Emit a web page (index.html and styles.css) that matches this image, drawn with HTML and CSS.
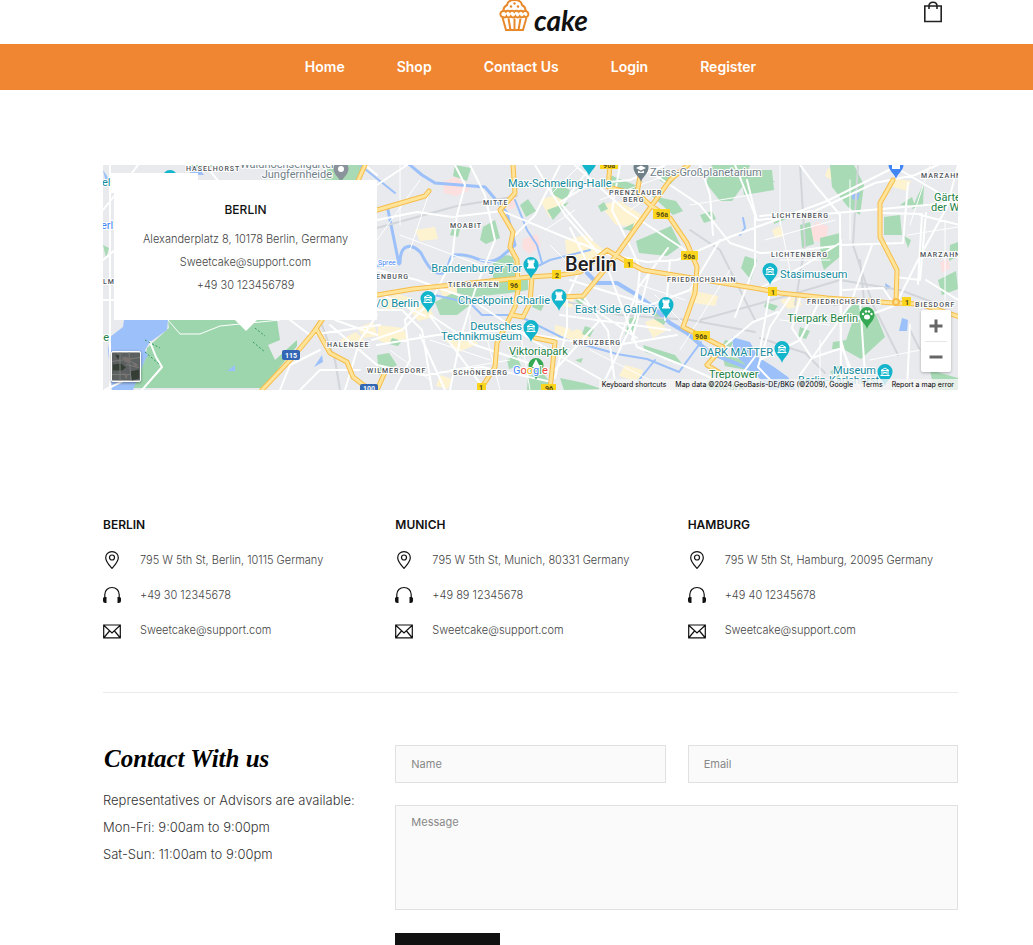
FILE: index.html
```html
<!DOCTYPE html>
<html lang="en">
<head>
<meta charset="utf-8">
<meta name="viewport" content="width=device-width, initial-scale=1">
<title>Cake - Contact Us</title>
<link rel="stylesheet" href="styles.css">
</head>
<body>
<svg class="defs" width="0" height="0" aria-hidden="true">
  <symbol id="i-pin" viewBox="0 0 18 18"><path d="M9 .6C5.2.6 2.7 3.300 2.700 6.700 2.700 10.600 6.600 14.500 9 17.400c2.400-2.900 6.300-6.800 6.300-10.700C15.300 3.300 12.800.6 9 .6z"/><circle cx="9" cy="6.500" r="2.500"/></symbol>
  <symbol id="i-phone" viewBox="0 0 18 18"><path d="M1.800 12V8.500C1.800 4.500 4.800 1.500 9 1.500s7.200 3 7.200 7V12"/><path class="solid" d="M0 12.500q0-1.500 1.500-1.500h2v6h-1Q0 17 0 14.500zM18 12.500q0-1.500-1.500-1.500h-2v6h1q2.500 0 2.500-2.500z"/></symbol>
  <symbol id="i-mail" viewBox="0 0 18 18"><path d="M.7 4h16.600v12.800H.7zM1 4.500l8 7.500 8-7.500M1 16.500L6.500 10M17 16.500L11.500 10"/></symbol>
</svg>

<header class="top container">
  <a class="logo" href="#" aria-label="Cake home">
    <svg width="31" height="34" viewBox="0 0 31 34" aria-hidden="true" fill="none" stroke="#e8892b" stroke-width="2">
      <path d="M4.500 13C4 8.500 6 7 8 6 8.500 2.500 11.500 1 15.500 1s7 1.500 7.500 5c2 1 4 2.500 3.500 7"/>
      <path d="M3 12.500c-2.500 1-2 5 .5 5.500 1.500.5 3.500.5 4-.8 1 1.600 3.500 1.600 4.300 0 1 1.600 3.700 1.600 4.600 0 1 1.600 3.500 1.600 4.400 0 1 1.500 3.300 1.500 4.200 0 1 1.300 3 1 3.800-.2 1-1.500.5-4-1-4.500-1-1-3-.8-3.800.3-1-1.300-3.300-1.300-4.200 0-1-1.300-3.500-1.300-4.400 0-1-1.300-3.500-1.300-4.400 0-1-1.300-3.200-1.300-4.200 0-1-1.200-2.800-1.200-3.800-.3z"/>
      <path d="M3.500 18.500L7 31h17l3.500-12.500M9.500 19.500L11.500 31M15.500 19.500V31M21.500 19.500L19.500 31"/>
      <g fill="#e8892b" stroke="none"><circle cx="12" cy="7.500" r="1.300"/><circle cx="15.500" cy="4.500" r="1.200"/><circle cx="19" cy="7.500" r="1.300"/></g>
    </svg>
    <span>cake</span>
  </a>
  <a class="bag" href="#" aria-label="Shopping bag">
    <svg width="20" height="22" viewBox="0 0 20 22" fill="none" stroke="#222" stroke-width="1.600"><path d="M1.800 5h16.400v15.500H1.800zM6 8V5c0-5 8-5 8 0v3"/></svg>
  </a>
</header>

<nav class="nav container" aria-label="Main">
  <a href="#">Home</a><a href="#">Shop</a><a href="#">Contact Us</a><a href="#">Login</a><a href="#">Register</a>
</nav>

<main class="container">
  <section class="map" aria-label="Map of Berlin">
    <svg class="map-art" viewBox="103 165 855 225" preserveAspectRatio="xMidYMid slice" role="img" aria-label="Berlin">
      <defs>
        <g id="drop"><path d="M0 11C-1 6-7.500 3-7.500-3.500a7.500 7.500 0 0 1 15 0C7.500 3 1 6 0 11z"/></g>
        <g id="g-museum" fill="none" stroke="#fff"><path d="M-4-4.500L0-7l4 2.500zM-3-4.500v5M3-4.500v5M-4.500.500h9M-1.200-.8v-2.400L0-2l1.200-1.200v2.400"/></g>
        <g id="g-tower"><path fill="#fff" d="M-3.500-8.500h2v1h1v-1h1v1h1v-1h2v3l-1 1L3-1h1v1.500h-8V-1h1l.5-3.500-1-1z"/></g>
      </defs>
      <rect x="103" y="165" width="855" height="225" fill="#e8eaed"/>

      <g fill="#fef3d0">
        <path d="M378 325l25 3 5 10-20 6-10-4zM380 300l18-6 14 4-4 9-24 3zM408 308l20-5 6 14-16 4zM440 290l16-4 2 10-14 4zM445 340l25-6 8 10-20 8zM415 230l20-3 3 12-18 2zM600 205l20-4 22 14-4 12-22-2zM565 240l20-5 18 14-16 14-20-6zM540 200l18-6 8 12-16 12zM645 322l12-4 10 12-14 8zM560 335l18-6 12 8-14 10zM625 365l18 5-4 12-20-6zM690 290l28 6-3 10-22-3zM555 325l16 4-4 12-12-3zM440 375l12 4-4 10-12-3zM772 230l8-4 4 10-9 2zM828 168l8 4-4 8-7-4zM893 178l18 3-4 10-14-4zM780 300l18-3 4 8-14 4zM340 340l16-8 8 8-15 9zM357 328l16-6 5 14-14 2zM562 293l12 3-2 12-11-3zM720 185l8 2-2 8-8-2z"/>
      </g>
      <g fill="#fce0e0"><path d="M443 182l14-6 13 14-14 6-12-3zM523 239l14-5 4 12-12 8-7-6zM660 240l9-4 4 12-10 2zM808 232l8-10 12 4-2 18-14-4zM940 262l8-3 2 9-8 5zM508 200l8-4-1 12-7 2z"/></g>

      <g fill="#a8dab5">
        <path fill="#9dd6ad" d="M168 320l109 0 3 20-12 5 7 15 22-20 0 6-34 42-131 0 13-28 2-12 22-20z"/>
        <path d="M328 165h39l-12 20h-32zM190 165l10 8 14-8zM455 165l16 3-4 13-14-5zM483 227l12-7 5 18-14 6-6-4zM453 226l7 3-2 8-8-2zM457 287l36-9v-18l14-5 6 2 4 20 11 3v10l-18 3-37 4-16-4zM435 302l18-9 20 10-16 12h-17zM520 205l8-6 8 12-10 6zM547 210l22-8-16 18zM553 182l17 8-4 12-14-8zM610 175l30 12-6 8-24-10zM598 206l6-4 4 7-7 3zM622 229l12-6-2 8zM636 241l35-15 10 20-14 10-28-3zM712 165h38l-8 22-10 14h-12l-14-18zM740 170h32l2 20-30 5zM745 256l12 4-6 20-10-12zM700 215l12-4 4 8-12 4zM773 215l8-2 5 6-12 5zM760 180l15 1-13 10zM830 165h24l10 20-4 30-12-8-16-20zM820 238l20-5 2 22-18 15-3-10zM800 225l10-3 4 22-12 4zM884 217l16-2 2 20-18 0zM918 195l6-12-1 22-11 4zM950 245l8-3v14l-9 5zM904 236l7 4-3 8zM853 320l22-8 10 25-24 22-18-10zM833 342l14-2-4 10-11-1zM800 327l10 4-4 8-8-2zM830 372l10-7-1 15zM655 308l12 10-3 7-10-6zM630 318l8-1-6 16-7 2zM585 326l9 3-4 8-8-3zM643 345l32 10 8 10-38-13zM560 378l24 5 18 6-38 1zM528 376l14-4 8 10-10 8h-13zM507 360l9-6 5 12-12 3zM392 338l10 3-4 5-9-2zM377 355l12-2 8 12-18 10zM722 355l28 6-3 9-22-4zM725 340l8 2-2 5-8-2zM707 380l28 2-2 8h-27zM930 370l28 8v12h-24zM766 302l12 4-4 5-10-4zM900 205l12-8 3 9zM103 245l6 3-3 10zM938 280l18-9 2 18-16 6zM535 300l10 3-4 8-9-4zM658 170l20 5-8 10-10-4z"/>
        <path d="M652 196l24 5 7 10-10 4zM575 360l8-2-2 5zM575 300l9-2-2 9zM842 314l12-10 10 3-8 12z"/>
      </g>

      <g fill="#9cc0f9">
        <path d="M124 320h44l-1 10-17 12-5 8 3 5-3 5-5 12-7 18h-21l-4-40 2-13 13-10z"/>
        <path d="M732 337l18 5 8 15 16 10 14 10 8 13h-25l-22-22-15-14zM902 318l6 2-1 11-8 0zM852 193l8 0-2 7-6-1zM885 283l6 4-5 3zM103 170l8 12-5 1zM188 167l10 0 6 8h-13zM322 355l-8 12 9-5zM235 365l-8 6 8 0z"/>
      </g>
      <g class="line" stroke="#9cc0f9">
        <path stroke-width="4" d="M587 273l10 10 20 0 20 12 16 12 17 16 17 10 23 20 50 20"/>
        <path stroke-width="3" d="M400 263c0-20 12-20 21-10 6 12 12 22 22 20 8-2 4-20 14-18 20-2 26 14 44 2l14-12-8-32-22-26-50-4-13-8-18-15M399 264l-11-54"/>
        <path stroke-width="2" d="M425 293l45 10 12 12 35 0 20 10 30 15 50 14 30 5 32 13 22-30M515 200l12 30 10 15 5 18M377 266l20-3M530 270l20-10 40-10M740 235l5-7-2-10M360 165l35 28M635 385l20-25"/>
      </g>
      <g class="line" stroke="#d2d5da" stroke-width="2">
        <path d="M377 228l80-22 60-10M560 300l60 15 70 5 65 12M690 230l30 20 35 70M700 320l90-25 50-15 60 10 40 15M858 165l-5 80 20 60 25 50M860 260l4 40-30 5M800 165l5 80-10 60M320 320l15 40 5 30M760 338l45 15 20 20M910 330l10 20"/>
      </g>

      <g class="line" stroke="#fff" stroke-width="2">
        <path d="M377 220l40-8 35 5 50-6 60 25 45 18 40 8 30-2 50-22 60-22 40-15 70-35M377 185l30-20M377 270l40 10 55 20 60 40 70 40M455 165l10 20-8 30-5 45-20 40-30 30-30 10M470 165l15 30 10 45-20 50-15 50-10 50M395 390l15-30-5-40 25-30M425 316l-40-20M430 315l45 30 60 20M430 316l15 20 40 54M445 390l-25-55M377 345l60-10 70-5 70 12 40 3 60-10M535 165l30 50 35 40M560 165l-25 50-20 20M592 165l-30 40 30 35M575 165l50 45 60 40M620 165l-8 45 20 40 8 18-5 50-30 62M640 165l60 40 30 38 30 10 35-2 40-5M570 228l15 30-18 40 0 30-12 50M583 296l25 35 8 59M607 267l15 40 15 40 50 20 40 18M650 270l-18 70M668 248l-30 40-20 57M700 165l10 30 3 40M735 165l20 50v50l-20 52M747 180l10 40 203-18M560 202l30-18 40-4 35-15M800 165l15 20 25 30 1 180M760 216l55-5 60-28 40-8 45-20M841 245l62-2 5-60M880 213l42 1-4 70M895 277l25 3 6-67M872 245l-22 60-50 70M770 290l-10 60-30 40M790 297l-20 30-12 40 22 23M800 298l-8 30 20 30 30-10 18 42M841 240v100l15 55M843 290l40-2 10 15M760 288l40-20 40-25M820 300l-20 40-40 20M855 320l28-10 20-8M897 302l20-40 30-55 11-42M900 170l60 35M920 215l40 10M926 280l32 20M910 325l-3 65M860 300l6 90M720 240l-30 50-40 15-80-25M723 347l30-25 25-10M670 260l-5 60M577 298l60 40M600 320l-45 50M560 315l110 15M377 365l45 10 60-8 70 15M377 310l25 0 20 20 10 60M330 325l47 40M335 320l42 15M345 390l15-50 17-25M290 320l20 15 70-10M300 390l20-20 40 0M280 390l10-25 30-15M103 210l20-25 15-20M105 390l20-10M110 165v225M103 300l15 0M103 260l12-10M205 165l15 18M290 165v15M377 175l-12-10M150 342l6 15 6 10-20 23"/>
        <path stroke-width="1" d="M480 260l30 5M450 370l60-10M470 315v30M430 340l60 20M500 390l-15-60M530 390l-10-60M590 350l70 35M600 200l80-30M630 210l30-20M640 285l45 15M655 295l30 30M690 205l60-10M700 250l60-25M730 270l-50 80M780 165v60M765 240l70-20M780 260h50M790 270l-10-50M850 180v60M930 165l-20 60M945 220v80M908 235l50-8M780 320l50 5M820 340v50M870 360l50-10M550 245l20 20M545 230l30-20M580 165l-30 30M400 165v60M420 180l-43 60M400 235l80 30M410 250l20-60M390 350l40 30M168 320l12 14h20l20-8 60-6"/>
      </g>

      <g class="line" stroke="#f7bd4a" stroke-width="5">
        <path id="hw" d="M377 295l36-6 117-12 30-2 20-3 27-22 15 9 21 11 117 19 20 4 47 5 66 5 27 1 40 13M513 165l2 28-15 17 13 22-3 15 7 13 1 30-3 17-5 10-13 26-2 24-15 23M532 277l-2 26-7 14-11-2M535 338l20 4-5 48M560 297l23-1 24-29 8-10M688 165l-18 15-20 28-35 49M642 165l-5 28 13 12 20 13 17 25 10 24-2 26-12 34 20 10 20 10-16 18 13 8M610 165l-2 22 29 8M893 180l-13 23v34l17 33-1 32M377 210l48-14 4-5M365 165l-8 18M322 320l-9 13-20 24-31 33M317 330l13 23 17 9 6 15 17 13M377 390l8-18"/>
      </g>
      <use href="#hw" class="line" stroke="#fee49a" stroke-width="3"/>
      <circle cx="896" cy="302" r="3" fill="none" stroke="#f7bd4a" stroke-width="2"/>
      <path stroke="#2e9b62" stroke-width="1" stroke-dasharray="2 2" fill="none" d="M145 340l15 8M145 352l14 12M255 328l10 8M253 342l12 10"/>

      <g class="shield">
        <g fill="#fbd41d">
          <rect x="508" y="280" width="13" height="10"/><rect x="552" y="270" width="9" height="9"/><rect x="624" y="259" width="9" height="9"/><rect x="653" y="209" width="17" height="10"/><rect x="681" y="251" width="17" height="9"/><rect x="693" y="331" width="17" height="9"/><rect x="600" y="160" width="18" height="9"/><rect x="768" y="287" width="9" height="9"/><rect x="902" y="297" width="9" height="9"/><rect x="477" y="383" width="9" height="9"/><rect x="541" y="384" width="15" height="9"/>
        </g>
        <g fill="#3367b5"><rect x="282" y="350" width="18" height="10" rx="2"/><rect x="360" y="384" width="18" height="9" rx="2"/></g>
        <g class="num"><text x="514" y="288">96</text><text x="557" y="278">2</text><text x="629" y="267">1</text><text x="662" y="217">96a</text><text x="689" y="259">96a</text><text x="701" y="339">96a</text><text x="609" y="168">96a</text><text x="773" y="295">1</text><text x="907" y="305">1</text><text x="481" y="390">1</text><text x="549" y="391">96</text><text class="inv" x="291" y="358">115</text><text class="inv" x="369" y="391">100</text></g>
      </g>

      <g class="area">
        <text x="186" y="171">HASELHORST</text><text x="483" y="205">MITTE</text><text x="450" y="228">MOABIT</text><text x="609" y="195">PRENZLAUER</text><text x="623" y="202">BERG</text><text x="448" y="287">TIERGARTEN</text><text x="376" y="279">ENBURG</text><text x="327" y="347">HALENSEE</text><text x="367" y="373">WILMERSDORF</text><text x="453" y="375">SCHÖNEBERG</text><text x="573" y="345">KREUZBERG</text><text x="667" y="282">FRIEDRICHSHAIN</text><text x="772" y="218">LICHTENBERG</text><text x="771" y="257">LICHTENBERG</text><text x="807" y="304">FRIEDRICHSFELDE</text><text x="915" y="307">BIESDORF</text><text x="921" y="178">MARZAHN</text><text x="920" y="257">MARZAHN-</text><text x="103" y="284">LM</text>
      </g>
      <g class="poi" fill="#128a9d">
        <text x="508" y="187">Max-Schmeling-Halle</text><text class="end" x="522" y="272">Brandenburger Tor</text><text class="end" x="419" y="307">/O Berlin</text><text class="end" x="550" y="304">Checkpoint Charlie</text><text class="end" x="522" y="330">Deutsches</text><text class="end" x="522" y="340">Technikmuseum</text><text class="end" x="657" y="313">East Side Gallery</text><text x="780" y="278">Stasimuseum</text><text class="end" x="773" y="356">DARK MATTER</text><text class="end" x="876" y="374">Museum</text><text x="798" y="384">Berlin-Karlshorst</text><text x="102" y="186">ell</text>
        <g fill="#708088"><text x="650" y="176">Zeiss-Großplanetarium</text><text x="240" y="168">Waldhochseilgarten</text><text class="end" x="332" y="178">Jungfernheide</text></g>
        <g fill="#238246"><text x="509" y="355">Viktoriapark</text><text class="end" x="858" y="322">Tierpark Berlin</text><text x="934" y="201">Gärten</text><text x="931" y="211">der Welt</text><text x="709" y="378">Treptower</text><text x="722" y="390">Park</text><text x="97" y="341">be</text></g>
        <g fill="#4285f4"><text x="101" y="229">erl</text><text x="378" y="265" class="river">Spree</text></g>
      </g>
      <text class="city" x="565" y="271">Berlin</text>

      <g fill="#12b5cb">
        <use href="#drop" x="531" y="268"/><use href="#drop" x="559" y="300"/><use href="#drop" x="666" y="308"/><use href="#drop" x="428" y="302"/><use href="#drop" x="531" y="331"/><use href="#drop" x="770" y="274"/><use href="#drop" x="782" y="352"/><use href="#drop" x="885" y="375"/><use href="#drop" x="589" y="165"/><use href="#drop" x="170" y="181"/>
      </g>
      <use href="#drop" x="641" y="171" fill="#708088"/><use href="#drop" x="341" y="172" fill="#8a939b"/><use href="#drop" x="896" y="168" fill="#4285f4"/><use href="#drop" x="867" y="318" fill="#34a853"/><use href="#drop" x="536" y="369" fill="#34a853"/>
      <use href="#g-tower" x="531" y="268"/><use href="#g-tower" x="559" y="300"/><use href="#g-tower" x="666" y="308"/>
      <use href="#g-museum" x="428" y="302"/><use href="#g-museum" x="531" y="331"/><use href="#g-museum" x="770" y="274"/><use href="#g-museum" x="782" y="352"/><use href="#g-museum" x="885" y="375"/>
      <g fill="#fff"><circle cx="341" cy="169" r="3"/><path d="M636 168l5-2.500 5 2.500-5 2.500zM638 170.500l3 1.500 3-1.500v2.500h-6zM892 165h8v4h-8zM536 359l4 8h-2l2 3h-8l2-3h-2z"/><ellipse cx="867" cy="317" rx="3" ry="2.500"/><circle cx="863" cy="314" r="1.200"/><circle cx="866" cy="311.500" r="1.200"/><circle cx="869" cy="311.500" r="1.200"/><circle cx="871.500" cy="314" r="1.200"/></g>
      <text class="google" x="513" y="374"><tspan fill="#4285f4">G</tspan><tspan fill="#ea4335">o</tspan><tspan fill="#f4b400">o</tspan><tspan fill="#4285f4">g</tspan><tspan fill="#34a853">l</tspan><tspan fill="#ea4335">e</tspan></text>
    </svg>

    <div class="map-tab" aria-hidden="true"></div>
    <article class="card">
      <h2>BERLIN</h2>
      <p>Alexanderplatz 8, 10178 Berlin, Germany</p>
      <p>Sweetcake@support.com</p>
      <p>+49 30 123456789</p>
    </article>
    <button class="satellite" type="button" aria-label="Show satellite imagery">
      <svg viewBox="0 0 28 28" aria-hidden="true"><rect width="28" height="28" fill="#5c6060"/><path fill="#343e35" d="M1 12l8-1 5 4-4 3-9 0zM18 19l9-2v9l-7 2zM3 2l5 1-2 4z"/><path stroke="#7a7c7a" fill="none" d="M8 0v28M0 9l28-4M14 12l13 3M17 0l2 28M0 22h18M10 5l15 7"/><path fill="#77716f" d="M12 4l8 2-3 5-5-2zM20 10l6 2-2 4zM11 20l5 2-2 5z"/></svg>
    </button>
    <div class="zoom">
      <button type="button" aria-label="Zoom in"><svg width="14" height="14" viewBox="0 0 14 14"><path d="M5.500.5h3v5h5v3h-5v5h-3v-5h-5v-3h5z"/></svg></button>
      <button type="button" aria-label="Zoom out"><svg width="14" height="14" viewBox="0 0 14 14"><path d="M.5 5.500h13v3H.5z"/></svg></button>
    </div>
    <div class="credits"><a href="#">Keyboard shortcuts</a><span>Map data ©2024 GeoBasis-DE/BKG (©2009), Google</span><a href="#">Terms</a><a href="#">Report a map error</a></div>
  </section>

  <section class="offices grid">
    <article>
      <h2>BERLIN</h2>
      <p><svg class="icon"><use href="#i-pin"/></svg>795 W 5th St, Berlin, 10115 Germany</p>
      <p><svg class="icon"><use href="#i-phone"/></svg>+49 30 12345678</p>
      <p><svg class="icon"><use href="#i-mail"/></svg>Sweetcake@support.com</p>
    </article>
    <article>
      <h2>MUNICH</h2>
      <p><svg class="icon"><use href="#i-pin"/></svg>795 W 5th St, Munich, 80331 Germany</p>
      <p><svg class="icon"><use href="#i-phone"/></svg>+49 89 12345678</p>
      <p><svg class="icon"><use href="#i-mail"/></svg>Sweetcake@support.com</p>
    </article>
    <article>
      <h2>HAMBURG</h2>
      <p><svg class="icon"><use href="#i-pin"/></svg>795 W 5th St, Hamburg, 20095 Germany</p>
      <p><svg class="icon"><use href="#i-phone"/></svg>+49 40 12345678</p>
      <p><svg class="icon"><use href="#i-mail"/></svg>Sweetcake@support.com</p>
    </article>
  </section>

  <section class="contact grid">
    <div class="intro">
      <h1>Contact With us</h1>
      <p>Representatives or Advisors are available:</p>
      <p>Mon-Fri: 9:00am to 9:00pm</p>
      <p>Sat-Sun: 11:00am to 9:00pm</p>
    </div>
    <form class="form">
      <input type="text" name="name" placeholder="Name" aria-label="Name">
      <input type="email" name="email" placeholder="Email" aria-label="Email">
      <textarea name="message" placeholder="Message" aria-label="Message"></textarea>
      <button type="submit" aria-label="Send message"></button>
    </form>
  </section>
</main>
</body>
</html>
```
FILE: styles.css
```css
* { box-sizing: border-box; }
body { margin: 0; background: #fff; color: #111; font-family: Inter, "Open Sans", sans-serif; }
h1, h2, p { margin: 0; }
a { color: inherit; text-decoration: none; }
.defs { position: absolute; }
.container { padding-left: 103px; padding-right: 75px; }
.grid { display: grid; grid-template-columns: repeat(3, 1fr); column-gap: 22px; }

.top { display: grid; grid-template-columns: 1fr auto 1fr; height: 44px; align-items: start; }
.logo { grid-column: 2; display: flex; gap: 4px; padding-left: 26px; }
.logo svg { margin-top: -1px; }
.logo span { font: italic 700 28px/40px Lato, sans-serif; color: #111; }
.bag { justify-self: end; padding: 1px 15px 0 0; }
.bag svg { display: block; }

.nav { display: flex; justify-content: center; gap: 52px; background: #f08632; color: #fff; font-size: 14px; font-weight: 600; line-height: 46px; }

.map { position: relative; margin-top: 75px; }
.map-art { display: block; width: 100%; min-height: 225px; font-family: Roboto, sans-serif; }
.line { fill: none; stroke-linejoin: round; stroke-linecap: round; }
.area text { font-size: 7px; font-weight: 500; letter-spacing: 1px; fill: #4d5358; stroke: #fff; stroke-width: 2px; paint-order: stroke; }
.poi text { font-size: 11px; stroke: #fff; stroke-width: 2px; paint-order: stroke; }
.poi .end { text-anchor: end; }
.poi .river { font-size: 7px; }
.city { font-size: 20px; font-weight: 500; fill: #202124; stroke: #fff; stroke-width: 2px; paint-order: stroke; }
.google { font-size: 11px; stroke: #fff; stroke-width: 2px; paint-order: stroke; }
.num text { font-size: 7px; font-weight: 700; fill: #554a12; text-anchor: middle; }
.num .inv { fill: #fff; }

.map-tab { position: absolute; left: 8px; top: 8px; width: 87px; height: 20px; background: #fff; }
.card { position: absolute; left: 11px; top: 15px; width: 263px; height: 140px; padding-top: 20px; background: #fff; text-align: center; }
.card::after { content: ""; position: absolute; left: 50%; top: 100%; margin-left: -11px; border: 11px solid transparent; border-top-color: #fff; border-bottom: 0; }
.card h2 { font-size: 12px; font-weight: 500; line-height: 20px; margin-bottom: 8px; }
.card p { font-size: 11px; font-weight: 300; line-height: 23px; color: #444; }
.satellite { position: absolute; left: 8px; bottom: 8px; width: 30px; height: 31px; padding: 0; border: 1px solid #fff; border-radius: 2px; box-shadow: 0 1px 3px #0006; overflow: hidden; }
.satellite svg { display: block; width: 100%; height: 100%; }
.zoom { position: absolute; right: 7px; bottom: 18px; width: 30px; padding: 0 4px; background: #fff; border-radius: 2px; box-shadow: 0 1px 3px #0004; }
.zoom button { display: flex; width: 100%; height: 31px; align-items: center; justify-content: center; padding: 0; border: 0; background: none; }
.zoom button + button { border-top: 1px solid #e6e6e6; }
.zoom svg { fill: #666; flex: none; }
.credits { position: absolute; right: 0; bottom: 0; display: flex; gap: 9px; padding: 0 4px 0 3px; background: #f5f5f5cc; font: 7px/11px Inter, sans-serif; color: #000; white-space: nowrap; }

.offices { padding: 125px 0 45px; border-bottom: 1px solid #ebebeb; }
.offices h2 { font-size: 12px; font-weight: 600; line-height: 20px; margin-bottom: 7px; }
.offices p { display: flex; align-items: center; gap: 19px; height: 35px; font-size: 11px; font-weight: 300; color: #444; }
.icon { width: 18px; height: 18px; flex: none; fill: none; stroke: #111; stroke-width: 1.2px; }
.solid { fill: #111; stroke: none; }

.contact { padding: 52px 0 60px; }
.intro h1 { font: italic 700 25px/28px "Liberation Serif", serif; color: #000; margin-bottom: 14px; padding-left: 1px; }
.intro p { font-size: 13px; font-weight: 300; line-height: 27px; color: #333; white-space: nowrap; }
.form { grid-column: 2 / 4; display: grid; grid-template-columns: 1fr 1fr; gap: 22px; }
.form input, .form textarea { display: block; width: 100%; margin: 0; border: 1px solid #e1e1e1; border-radius: 0; background: #fafafa; padding: 0 15px; font: 11px/14px Inter, sans-serif; color: #444; }
.form input { height: 38px; }
.form textarea { grid-column: 1 / 3; height: 105px; padding-top: 9px; resize: none; }
.form ::placeholder { color: #888; opacity: 1; }
.form button { width: 105px; height: 44px; margin-top: 1px; border: 0; background: #111; }
```
